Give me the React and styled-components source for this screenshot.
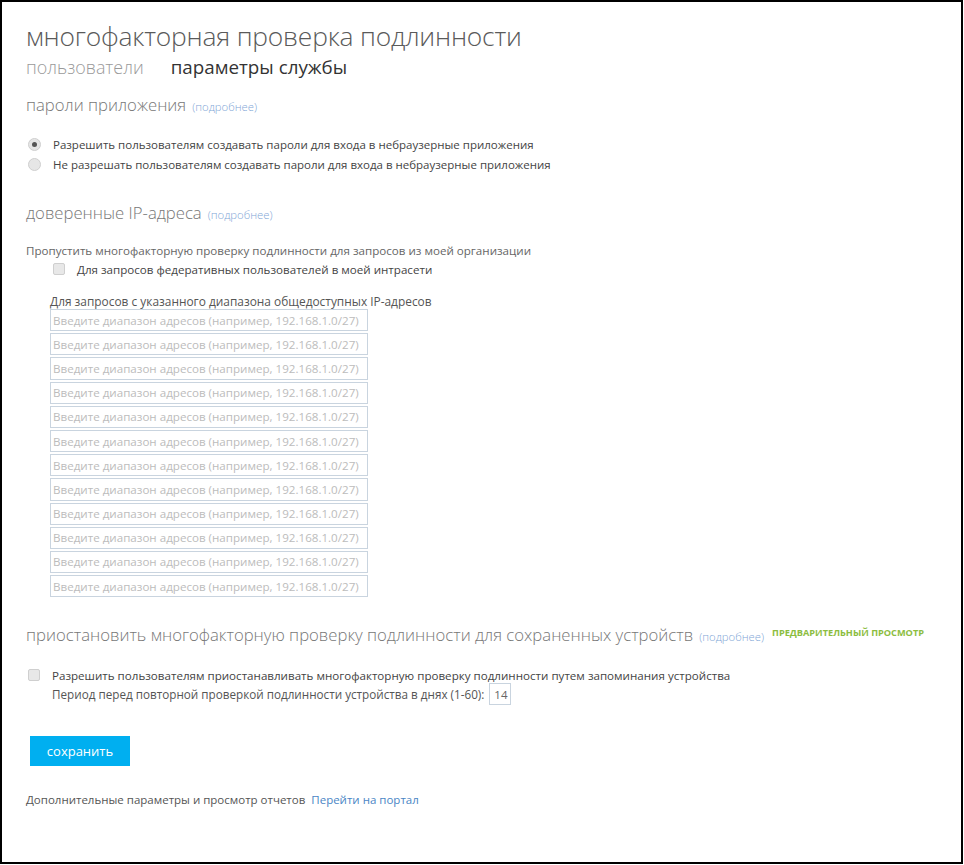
import styled, { createGlobalStyle } from "styled-components";

const GlobalStyle = createGlobalStyle`
  html, body {
    margin: 0;
    padding: 0;
    background: #fff;
  }
  body {
    font-family: "Open Sans", "Liberation Sans", sans-serif;
  }
`;

const Frame = styled.div`
  box-sizing: border-box;
  width: 963px;
  height: 864px;
  border: 2px solid #000;
  padding: 17px 24px 0 24px;
  background: #fff;
`;

const Title = styled.h1`
  margin: 0;
  font-size: 26.4px;
  font-weight: 300;
  line-height: 34px;
  color: #5a5a5a;
  letter-spacing: -0.2px;
`;

const Tabs = styled.div`
  display: flex;
  gap: 27px;
  height: 26px;
  margin-top: 1px;
  align-items: center;
`;

const Tab = styled.span`
  font-size: ${(p) => (p.$active ? 18.8 : 17.9)}px;
  font-weight: ${(p) => (p.$active ? 400 : 300)};
  color: ${(p) => (p.$active ? "#333" : "#9a9a9a")};
`;

const Heading = styled.h2`
  margin: ${(p) => p.$top || 0}px 0 0 0;
  font-size: 16.7px;
  font-weight: 300;
  line-height: 22px;
  color: #777;
  display: flex;
  align-items: baseline;
  gap: 6px;
`;

const More = styled.a`
  font-size: 11.3px;
  color: #7fa6d6;
  text-decoration: none;
`;

const Preview = styled.span`
  font-size: 9.2px;
  font-weight: 700;
  color: #8cbd3f;
  align-self: flex-start;
  margin: -2px 0 0 2px;
`;

const OptionList = styled.div`
  display: flex;
  flex-direction: column;
  gap: 4px;
  margin: ${(p) => p.$top || 0}px 0 0 ${(p) => p.$left || 0}px;
`;

const Option = styled.label`
  display: flex;
  align-items: center;
  gap: 12px;
  height: 16px;
  font-size: ${(p) => p.$size || 11.5}px;
  color: #444;
`;

const Radio = styled.span`
  width: 11px;
  height: 11px;
  border-radius: 50%;
  border: 1px solid #cfcfcf;
  background: #e6e6e6;
  display: flex;
  align-items: center;
  justify-content: center;
  &::after {
    content: "";
    width: 5px;
    height: 5px;
    border-radius: 50%;
    background: ${(p) => (p.$checked ? "#555" : "transparent")};
  }
`;

const Check = styled.span`
  width: 10px;
  height: 10px;
  border-radius: 2px;
  border: 1px solid #cfcfcf;
  background: #e8e8e8;
`;

const Text = styled.p`
  margin: ${(p) => p.$top || 0}px 0 0 ${(p) => p.$left || 0}px;
  font-size: ${(p) => p.$size || 11.5}px;
  line-height: 16px;
  color: ${(p) => p.$color || "#666"};
`;

const InputStack = styled.div`
  display: flex;
  flex-direction: column;
  gap: 2px;
  margin: 0 0 0 24px;
`;

const RangeInput = styled.input`
  box-sizing: border-box;
  width: 318px;
  height: 22.2px;
  border: 1px solid #c9d4df;
  padding: 0 2px;
  font-family: "Open Sans", "Liberation Sans", sans-serif;
  font-size: 11.6px;
  color: #444;
  outline: none;
  &::placeholder {
    color: #bcbcbc;
  }
`;

const PeriodRow = styled.div`
  display: flex;
  align-items: center;
  gap: 5px;
  margin: 0 0 0 26px;
  font-size: 11.7px;
  color: #555;
  height: 22px;
`;

const DaysInput = styled.input`
  box-sizing: border-box;
  width: 22px;
  height: 22px;
  border: 1px solid #c9d4df;
  padding: 0 0 0 4px;
  font-family: "Open Sans", "Liberation Sans", sans-serif;
  font-size: 11.5px;
  color: #666;
  outline: none;
`;

const SaveButton = styled.button`
  display: block;
  margin: 31px 0 0 4px;
  width: 100px;
  height: 30px;
  border: none;
  background: #00aff0;
  color: #fff;
  font-family: "Open Sans", "Liberation Sans", sans-serif;
  font-size: 13px;
  cursor: pointer;
`;

const Footer = styled.p`
  margin: 26px 0 0 0;
  font-size: 11.5px;
  color: #555;
  & a {
    color: #4a86c5;
    text-decoration: none;
    margin-left: 6px;
  }
`;

const ranges = Array.from({ length: 12 }, (_, i) => i);

export default function App() {
  return (
    <>
      <GlobalStyle />
      <Frame>
        <Title>многофакторная проверка подлинности</Title>
        <Tabs>
          <Tab>пользователи</Tab>
          <Tab $active>параметры службы</Tab>
        </Tabs>

        <Heading $top={14}>
          пароли приложения <More href="#">(подробнее)</More>
        </Heading>
        <OptionList $top={18} $left={2}>
          <Option>
            <Radio $checked />
            Разрешить пользователям создавать пароли для входа в небраузерные приложения
          </Option>
          <Option>
            <Radio />
            Не разрешать пользователям создавать пароли для входа в небраузерные приложения
          </Option>
        </OptionList>

        <Heading $top={30}>
          доверенные IP-адреса <More href="#">(подробнее)</More>
        </Heading>
        <Text $top={17} $size={11.6}>
          Пропустить многофакторную проверку подлинности для запросов из моей организации
        </Text>
        <OptionList $top={2} $left={27}>
          <Option $size={11.6}>
            <Check />
            Для запросов федеративных пользователей в моей интрасети
          </Option>
        </OptionList>
        <Text $top={16} $left={24} $color="#555" $size={11.9}>
          Для запросов с указанного диапазона общедоступных IP-адресов
        </Text>
        <InputStack>
          {ranges.map((i) => (
            <RangeInput
              key={i}
              placeholder="Введите диапазон адресов (например, 192.168.1.0/27)"
            />
          ))}
        </InputStack>

        <Heading $top={27}>
          приостановить многофакторную проверку подлинности для сохраненных устройств
          <More href="#">(подробнее)</More>
          <Preview>ПРЕДВАРИТЕЛЬНЫЙ ПРОСМОТР</Preview>
        </Heading>
        <OptionList $top={19} $left={2}>
          <Option $size={11.6}>
            <Check />
            Разрешить пользователям приостанавливать многофакторную проверку подлинности путем запоминания устройства
          </Option>
        </OptionList>
        <PeriodRow>
          Период перед повторной проверкой подлинности устройства в днях (1-60):
          <DaysInput defaultValue="14" />
        </PeriodRow>

        <SaveButton>сохранить</SaveButton>
        <Footer>
          Дополнительные параметры и просмотр отчетов
          <a href="#">Перейти на портал</a>
        </Footer>
      </Frame>
    </>
  );
}
